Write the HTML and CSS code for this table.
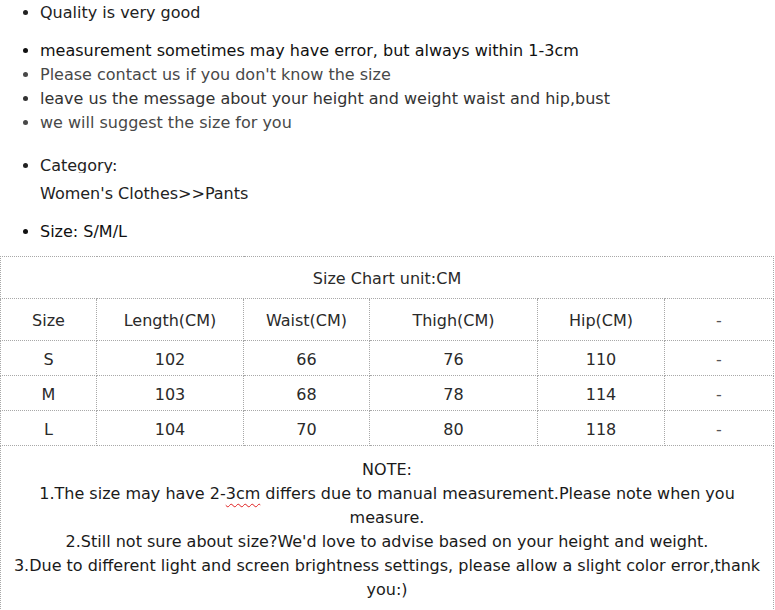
FILE: index.html
```html
<!DOCTYPE html>
<html>
<head>
<meta charset="utf-8">
<link rel="stylesheet" href="styles.css">
</head>
<body>
<div class="page">
  <ul class="list first">
    <li class="c2">Quality is very good</li>
  </ul>
  <ul class="list second">
    <li class="c1">measurement sometimes may have error, but always within 1-3cm</li>
    <li class="c4">Please contact us if you don't know the size</li>
    <li class="c3">leave us the message about your height and weight waist and hip,bust</li>
    <li class="c4">we will suggest the size for you</li>
  </ul>
  <ul class="list third">
    <li class="c2"><div class="clip">Category:</div><div class="sub">Women's Clothes&gt;&gt;Pants</div></li>
  </ul>
  <ul class="list fourth">
    <li class="c1">Size: S/M/L</li>
  </ul>
  <table class="chart">
    <colgroup>
      <col class="w1"><col class="w2"><col class="w3"><col class="w4"><col class="w5"><col class="w6">
    </colgroup>
    <tr class="tall"><td colspan="6">Size Chart unit:CM</td></tr>
    <tr class="tall"><td>Size</td><td>Length(CM)</td><td>Waist(CM)</td><td>Thigh(CM)</td><td>Hip(CM)</td><td class="dash">-</td></tr>
    <tr class="row"><td>S</td><td>102</td><td>66</td><td>76</td><td>110</td><td class="dash">-</td></tr>
    <tr class="row"><td>M</td><td>103</td><td>68</td><td>78</td><td>114</td><td class="dash">-</td></tr>
    <tr class="row"><td>L</td><td>104</td><td>70</td><td>80</td><td>118</td><td class="dash">-</td></tr>
    <tr><td colspan="6" class="note">NOTE:<br>1.The size may have 2-<span class="spell">3cm</span> differs due to manual measurement.Please note when you measure.<br>2.Still not sure about size?We'd love to advise based on your height and weight.<br>3.Due to different light and screen brightness settings, please allow a slight color error,thank you:)</td></tr>
  </table>
</div>
</body>
</html>
```
FILE: styles.css
```css
html, body {
  margin: 0;
  padding: 0;
  background: #fff;
}
body {
  font-family: "DejaVu Sans", Verdana, sans-serif;
  font-size: 16px;
  line-height: 24px;
  color: #222;
}
.page {
  width: 775px;
  height: 610px;
  overflow: hidden;
  padding-top: 1px;
  box-sizing: border-box;
}
.list {
  margin: 0;
  padding-left: 40px;
}
.second { margin-top: 14px; }
.third { margin-top: 19px; }
.fourth { margin-top: 14px; }
.c1 { color: #111; }
.c2 { color: #222; }
.c3 { color: #333; }
.c4 { color: #484848; }
.clip {
  height: 19px;
  overflow: hidden;
}
.sub {
  margin-top: 9px;
}
.chart {
  margin-top: 12px;
  border-collapse: collapse;
  table-layout: fixed;
  width: 774px;
  color: #2a2a2a;
}
.chart td {
  border: 1px dotted #a8a8a8;
  text-align: center;
  padding: 3px 0 0;
  vertical-align: middle;
}
.w1 { width: 96px; }
.w2 { width: 147px; }
.w3 { width: 126px; }
.w4 { width: 168px; }
.w5 { width: 127px; }
.w6 { width: 109px; }
.tall td { height: 38px; }
.row td { height: 31px; }
.dash { color: #555; }
.chart td.note {
  vertical-align: top;
  padding: 12px 10px 20px;
  color: #1a1a1a;
}
.spell {
  text-decoration: underline wavy #e02020;
  text-decoration-thickness: 1px;
  text-underline-offset: 4px;
}
```
